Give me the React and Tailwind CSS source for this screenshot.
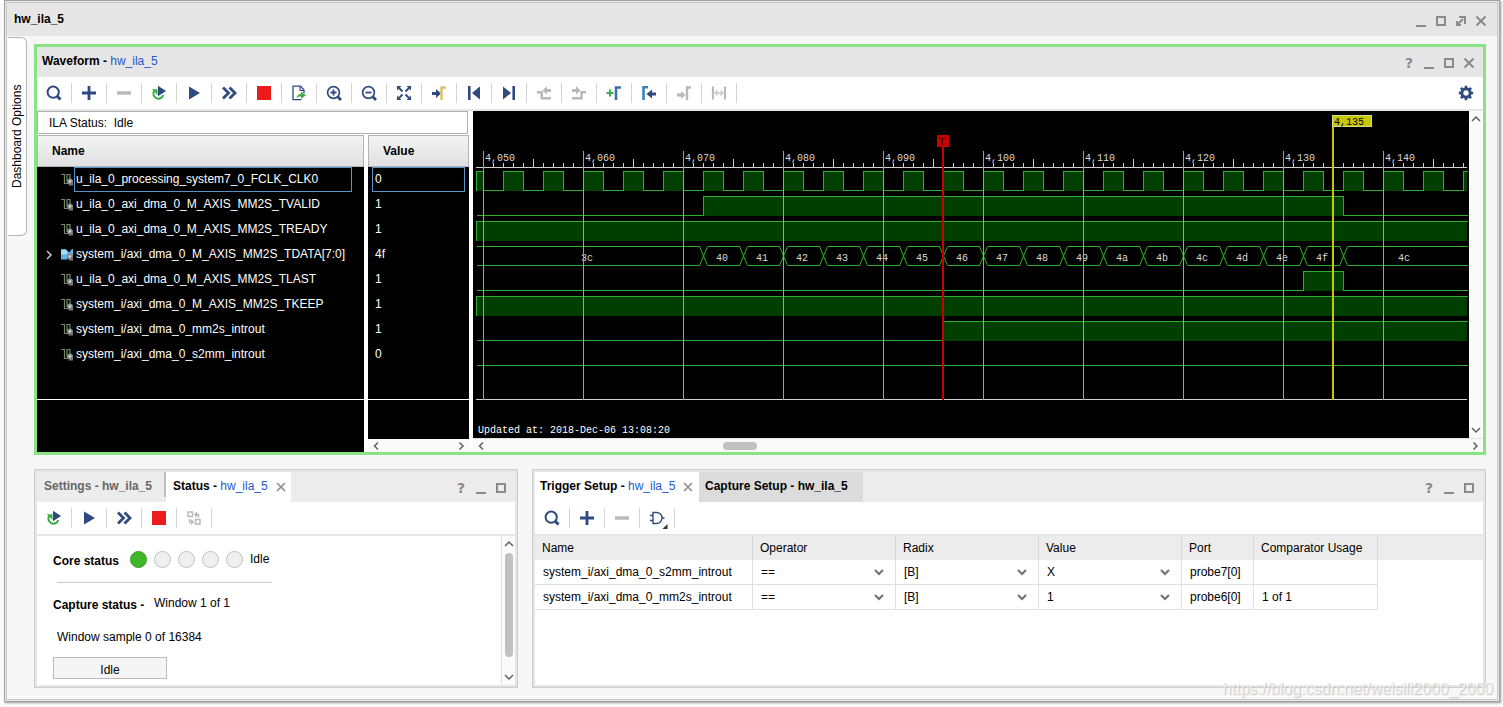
import React, { useState } from 'react';

const NAVY = '#2f4a80';
const GREEN = '#3fae49';
const GRAY = '#b8b8b8';

const icons = {
  search: (
    <g fill="none" stroke={NAVY}>
      <circle cx="7.2" cy="7.2" r="5.6" strokeWidth="2" />
      <path d="M11 11l3.5 3.5" strokeWidth="3" />
    </g>
  ),
  plus: <path d="M8 1v14M1 8h14" stroke={NAVY} strokeWidth="2.8" />,
  minus: <path d="M1 8h14" stroke={GRAY} strokeWidth="3.4" />,
  rerun: (
    <g>
      <path d="M3.500 5.500a5 5 0 1 0 8.700 4.500" fill="none" stroke={GREEN} strokeWidth="2" />
      <path d="M.800 4.300h5.700v5.700z" fill={GREEN} />
      <path d="M7 .800l8 5.200-8 5.200z" fill={NAVY} />
    </g>
  ),
  play: <path d="M3 1.500l11 6.500-11 6.500z" fill={NAVY} />,
  forward: <path d="M2 2.500L7.500 8 2 13.500M8.500 2.500L14 8l-5.500 5.500" fill="none" stroke={NAVY} strokeWidth="2.800" />,
  stop: <path d="M1 1h14v14H1z" fill="#ec1c1c" />,
  exportFile: (
    <g>
      <path d="M13 8V5L9.500 1.200H2v13.500h8.500" fill="none" stroke={NAVY} strokeWidth="1.300" />
      <path d="M9 1.500V5.500h4" fill="none" stroke={NAVY} strokeWidth="1.100" />
      <path d="M5.500 13c.3-3 2-4 4.500-4V6.500L15 10.200l-5 3.600v-2.300c-2 0-3.400.300-4.500 1.500z" fill={GREEN} />
    </g>
  ),
  zoomIn: (
    <g fill="none" stroke={NAVY}>
      <circle cx="7.500" cy="7.500" r="5.900" strokeWidth="1.700" />
      <path d="M11.500 11.500l3.500 3.500" strokeWidth="2.800" />
      <path d="M7.500 4.500v6M4.500 7.500h6" strokeWidth="1.800" />
    </g>
  ),
  zoomOut: (
    <g fill="none" stroke={NAVY}>
      <circle cx="7.500" cy="7.500" r="5.900" strokeWidth="1.700" />
      <path d="M11.500 11.500l3.500 3.500" strokeWidth="2.800" />
      <path d="M4.500 7.500h6" strokeWidth="1.800" />
    </g>
  ),
  fit: (
    <g fill={NAVY} stroke={NAVY} strokeWidth="1.800">
      <path d="M3 3l3.500 3.500M13 3L9.500 6.500M3 13l3.500-3.500M13 13L9.500 9.500" />
      <path d="M1 1h4.500L1 5.500zM15 1v4.500L10.500 1zM1 15v-4.500L5.500 15zM15 15h-4.500l4.500-4.500z" stroke="none" />
    </g>
  ),
  toCursor: (
    <g>
      <path d="M1 7h4V4l5 4.500L5 13v-3H1z" fill={NAVY} />
      <path d="M10.500 15V2.500H15" fill="none" stroke="#dcc56a" strokeWidth="2.600" />
    </g>
  ),
  first: (
    <g fill={NAVY}>
      <path d="M2 1h2.600v14H2z" />
      <path d="M14 1.500v13L6 8z" />
    </g>
  ),
  last: (
    <g fill={NAVY}>
      <path d="M11.400 1H14v14h-2.600z" />
      <path d="M2 1.500v13L10 8z" />
    </g>
  ),
  prevEdge: (
    <g>
      <path d="M1 7.200h4.800v6H15" fill="none" stroke={GRAY} strokeWidth="2.400" />
      <path d="M15 4h-4V1L6.500 5.500l4.500 4V7h4z" fill={GRAY} />
    </g>
  ),
  nextEdge: (
    <g>
      <path d="M15 7.200h-4.500v6H1" fill="none" stroke={GRAY} strokeWidth="2.400" />
      <path d="M1 4h4V1l4.500 4.500-4.500 4V7H1z" fill={GRAY} />
    </g>
  ),
  addMarker: (
    <g fill="none">
      <path d="M4 4.500v7M.500 8h7" stroke={GREEN} strokeWidth="2" />
      <path d="M10 15V2.500h5" stroke="#3a72b0" strokeWidth="2.600" />
    </g>
  ),
  prevMarker: (
    <g>
      <path d="M2.500 15V2.300H7" fill="none" stroke="#3a83bd" strokeWidth="2.600" />
      <path d="M15 7.500h-4V4.500L5.500 9l5.500 4.500v-3h4z" fill={NAVY} />
    </g>
  ),
  nextMarker: (
    <g>
      <path d="M1 8.500h4V6l4.500 4L5 14v-2.500H1z" fill={GRAY} />
      <path d="M11 15V2.500h4" fill="none" stroke={GRAY} strokeWidth="2.400" />
    </g>
  ),
  swap: (
    <g fill="none" stroke={GRAY} strokeWidth="2.200">
      <path d="M2 1.500v13M14 1.500v13" />
      <path d="M4 8h8" strokeWidth="1.200" />
      <path d="M6.500 5.500L4.200 8l2.300 2.500M9.500 5.500L11.800 8l-2.300 2.500" strokeWidth="1.100" />
    </g>
  ),
  gear: (
    <g fill="none" stroke={NAVY}>
      <circle cx="8" cy="8" r="4.200" strokeWidth="3" />
      <path d="M8 .8v3M8 12.200v3M.8 8h3M12.200 8h3M2.900 2.900l2 2M11.100 11.100l2 2M2.900 13.100l2-2M11.100 4.900l2-2" strokeWidth="2.600" />
    </g>
  ),
  dashboard: (
    <g fill="none" stroke={GRAY} strokeWidth="1.400">
      <path d="M2 2h4.500v4.500H2zM9.500 9.500H14V14H9.500z" />
      <path d="M9 4.500h3.500v3M11 2.300L8.800 4.500 11 6.700M3.500 9v3H7M5 9.800L7.200 12 5 14.200" />
    </g>
  ),
  gate: (
    <g>
      <path d="M4 2.500h3.500a5.500 5.500 0 0 1 0 11H4zM1 5.500h3M1 10.500h3M13 8h2.500" fill="none" stroke={NAVY} strokeWidth="1.400" />
      <path d="M18.500 14v5h-5z" fill="#333" />
    </g>
  ),
};

const Icon = ({ name }) => (
  <svg viewBox="0 0 16 16" className="w-4 h-4 overflow-visible" aria-hidden="true">{icons[name]}</svg>
);

const Toolbar = ({ items, children }) => (
  <div className="flex items-center h-[34px] pb-px bg-white border-b-2 border-[#e6e6e6]">
    {items.map((name) => (
      <button key={name} aria-label={name} className="flex items-center justify-center w-[35px] h-5 border-r border-[#d4d4d4]">
        <Icon name={name} />
      </button>
    ))}
    {children}
  </div>
);

const controlPaths = {
  minimize: 'M3 13h10',
  maximize: 'M4 4h8v8H4z',
  float: 'M6 4h6v7M10 6l-6 6M4 8v4h4',
  close: 'M3.500 3.500l9 9M12.500 3.500l-9 9',
};

const Controls = ({ items }) => (
  <div className="flex ml-auto pr-1 pt-1.5">
    {items.map((name) => (
      <button key={name} aria-label={name} className="flex items-center justify-center w-5 h-5">
        {name === 'help' ? (
          <span className="font-['DejaVu_Sans'] font-bold text-[14px] leading-4 text-[#8a8a8a]">?</span>
        ) : (
          <svg viewBox="0 0 16 16" className="w-4 h-4" fill="none" stroke="#8a8a8a" strokeWidth="2">
            <path d={controlPaths[name]} />
          </svg>
        )}
      </button>
    ))}
  </div>
);

const Chevron = ({ dir }) => {
  const d = {
    left: 'M8 2.500L4.500 6 8 9.500',
    right: 'M4.500 2.500L8 6 4.500 9.500',
    up: 'M2 8l4-4 4 4',
    down: 'M2 4l4 4 4-4',
  }[dir];
  return (
    <svg viewBox="0 0 12 12" className="w-3 h-3" fill="none" stroke="#606060" strokeWidth="1.500">
      <path d={d} />
    </svg>
  );
};

const signals = [
  { name: 'u_ila_0_processing_system7_0_FCLK_CLK0', value: '0' },
  { name: 'u_ila_0_axi_dma_0_M_AXIS_MM2S_TVALID', value: '1', high: [[4072, 4136]] },
  { name: 'u_ila_0_axi_dma_0_M_AXIS_MM2S_TREADY', value: '1', high: 'all' },
  { name: 'system_i/axi_dma_0_M_AXIS_MM2S_TDATA[7:0]', value: '4f', bus: true },
  { name: 'u_ila_0_axi_dma_0_M_AXIS_MM2S_TLAST', value: '1', high: [[4132, 4136]] },
  { name: 'system_i/axi_dma_0_M_AXIS_MM2S_TKEEP', value: '1', high: 'all' },
  { name: 'system_i/axi_dma_0_mm2s_introut', value: '1', high: [[4096, 4150]] },
  { name: 'system_i/axi_dma_0_s2mm_introut', value: '0', high: [] },
];

const SignalIcon = ({ bus }) => (
  <svg viewBox="0 0 13 13" className="w-[13px] h-[13px] shrink-0" aria-hidden="true">
    {bus ? (
      <g>
        <path d="M0 1.500h5l3 3 3-3.500h1v6.500H8l-2 4H0z" fill="#5fb0e6" />
        <path d="M0 1.500h5l2 3-2 2H0z" fill="#a8dbf7" />
      </g>
    ) : (
      <path d="M0 1.500h3.500v9H7M6 9V1.500h3V6" fill="none" stroke="#71886a" strokeWidth="1.200" />
    )}
    <circle cx="9" cy="8.500" r="3" fill="#8c8c8c" />
    <circle cx="9" cy="8.500" r="1.200" fill="#d8d8d8" />
    <path d="M7 12.500l5-5v5z" fill="#777" />
  </svg>
);

// 10px per sample, sample 4050 sits at x = 10
const X0 = 3;
const X1 = 994;
const toX = (sample) => Math.max(X0, Math.min(X1, 10 + (sample - 4050) * 10));

const clock = [[4049, 4050]];
for (let s = 4052; s < 4149; s += 4) clock.push([s, s + 2]);

const busValues = '40 41 42 43 44 45 46 47 48 49 4a 4b 4c 4d 4e 4f'.split(' ');

const Digital = ({ high, y }) => {
  const top = y;
  const low = y + 19;
  const ranges = high === 'all' ? [[4040, 4160]] : high;
  let d = `M${X0} ${low}`;
  ranges.forEach(([a, b]) => {
    const end = toX(b);
    d += `H${toX(a)}V${top}H${end}`;
    if (end < X1) d += `V${low}`;
  });
  if (!ranges.length || toX(ranges[ranges.length - 1][1]) < X1) d += `H${X1}`;
  return (
    <g>
      {ranges.map(([a, b]) => (
        <rect key={a} x={toX(a)} y={top} width={toX(b) - toX(a)} height={20} fill="#003f00" />
      ))}
      <path d={d} transform="translate(.5 .5)" fill="none" stroke="#2cb02c" />
    </g>
  );
};

const Bus = ({ y }) => {
  const edges = [];
  for (let s = 4072; s <= 4136; s += 4) edges.push(toX(s));
  const starts = [X0, ...edges.map((x) => x + 4)];
  const ends = [...edges.map((x) => x - 4), X1];
  return (
    <g>
      <g transform="translate(.5 .5)" fill="none" stroke="#2cb02c">
        {starts.map((x, i) => (
          <path key={x} d={`M${x} ${y}H${ends[i]}M${x} ${y + 19}H${ends[i]}`} />
        ))}
        {edges.map((x) => (
          <path key={x} shapeRendering="auto" d={`M${x - 4} ${y}L${x + 4} ${y + 19}M${x + 4} ${y}L${x - 4} ${y + 19}`} />
        ))}
      </g>
      <g fill="#d8d8d8" textAnchor="middle">
        <text x="114" y={y + 15}>3c</text>
        {busValues.map((v, i) => (
          <text key={v} x={249 + i * 40} y={y + 15}>{v}</text>
        ))}
        <text x="931" y={y + 15}>4c</text>
      </g>
    </g>
  );
};

const WaveView = () => {
  const majors = [4050, 4060, 4070, 4080, 4090, 4100, 4110, 4120, 4130, 4140];
  const ticks = [];
  for (let s = 4050; s <= 4148; s++) ticks.push(s);
  return (
    <svg className="block w-full h-[327px] bg-black font-['Liberation_Mono',monospace] text-[10px]" shapeRendering="crispEdges">
      {ticks.map((s) => (
        <rect key={s} x={toX(s)} y={s % 5 === 0 ? 48 : 52} width="1" height={s % 5 === 0 ? 8 : 4} fill="#d0d0d0" />
      ))}
      <rect x={X0} y="56" width="991" height="1" fill="#d0d0d0" />
      <rect x={X0} y="288" width="991" height="1" fill="#d0d0d0" />
      {signals.map((sig, i) =>
        sig.bus ? (
          <Bus key={sig.name} y={60 + i * 25} />
        ) : (
          <Digital key={sig.name} high={sig.high || clock} y={60 + i * 25} />
        )
      )}
      {majors.map((s) => (
        <g key={s}>
          <rect x={toX(s)} y="40" width="1" height="249" fill="#a0a0a0" />
          <text x={toX(s) + 2} y="50" fill="#d8d8d8">{s.toLocaleString('en-US')}</text>
        </g>
      ))}
      <rect x="464" y="24" width="12" height="12" fill="#c80000" />
      <rect x="469" y="30" width="2" height="259" fill="#c80000" />
      <text x="466" y="34" fill="#200000">T</text>
      <rect x="859" y="4" width="2" height="285" fill="#c8c800" />
      <rect x="859" y="4" width="40" height="12" fill="#d8d890" />
      <rect x="860" y="5" width="38" height="10" fill="#c8c800" />
      <text x="861" y="14" fill="#000">4,135</text>
      <text x="5" y="322" fill="#fff">Updated at: 2018-Dec-06 13:08:20</text>
    </svg>
  );
};

const mainTools = [
  'search', 'plus', 'minus', 'rerun', 'play', 'forward', 'stop', 'exportFile', 'zoomIn', 'zoomOut',
  'fit', 'toCursor', 'first', 'last', 'prevEdge', 'nextEdge', 'addMarker', 'prevMarker', 'nextMarker', 'swap',
];

const columnHead = 'flex items-center h-8 px-3.5 font-bold text-black border border-[#b4b4b4] bg-linear-to-b from-[#f4f4f4] to-[#e0e0e2]';

const Waveform = () => {
  const [selected, setSelected] = useState(0);
  return (
    <section className="border-[3px] border-[#8ae382] bg-white">
      <div className="flex h-[30px] bg-[#e6e6e6]">
        <h2 className="pl-[5px] leading-7 font-bold">
          Waveform - <span className="font-normal text-[#1f57d0]">hw_ila_5</span>
        </h2>
        <Controls items={['help', 'minimize', 'maximize', 'close']} />
      </div>
      <Toolbar items={mainTools}>
        <button aria-label="settings" className="ml-auto mr-[9px]"><Icon name="gear" /></button>
      </Toolbar>
      <div className="flex">
        <div className="flex flex-col w-[432px] mr-1 shrink-0">
          <div className="h-[23px] mr-px mb-px pl-[11px] leading-[22px] border border-[#b0b0b0] whitespace-pre">ILA Status:  Idle</div>
          <div className="flex flex-1 gap-1">
            <div className="flex flex-col w-[327px] bg-black text-white">
              <div className={columnHead}>Name</div>
              <ul className="h-[232px]">
                {signals.map((s, i) => (
                  <li key={s.name} onClick={() => setSelected(i)} className="flex items-center h-[25px] pl-1.5 pr-3">
                    <span className="flex w-[18px]">
                      {s.bus && (
                        <svg viewBox="0 0 12 12" className="w-3 h-3" fill="none" stroke="#c8c8c8" strokeWidth="1.5">
                          <path d="M4 2l4 4-4 4" />
                        </svg>
                      )}
                    </span>
                    <SignalIcon bus={s.bus} />
                    <span className={`flex-1 h-[25px] px-px leading-[23px] border ${i === selected ? 'border-[#5b93c4]' : 'border-transparent'}`}>
                      {s.name}
                    </span>
                  </li>
                ))}
              </ul>
              <div className="border-t border-white" />
            </div>
            <div className="flex flex-col flex-1 bg-black text-white">
              <div className={columnHead}>Value</div>
              <ul className="h-[232px]">
                {signals.map((s, i) => (
                  <li key={s.name} className={`h-[25px] ml-1 mr-1 px-0.5 leading-[23px] border ${i === selected ? 'border-[#5b93c4]' : 'border-transparent'}`}>
                    {s.value}
                  </li>
                ))}
              </ul>
              <div className="border-t border-white" />
              <div className="flex items-center justify-between h-[13px] mt-auto px-0.5 bg-[#fafafa]">
                <Chevron dir="left" />
                <Chevron dir="right" />
              </div>
            </div>
          </div>
        </div>
        <div className="flex-1 min-w-0">
          <div className="flex">
            <div className="flex-1 min-w-0"><WaveView /></div>
            <div className="flex flex-col items-center justify-between w-[14px] py-0.5 bg-[#fafafa]">
              <Chevron dir="up" />
              <Chevron dir="down" />
            </div>
          </div>
          <div className="flex items-center h-[14px] px-0.5 bg-[#fafafa] border-t border-[#e4e4e4]">
            <Chevron dir="left" />
            <div className="flex-1"><div className="w-[34px] h-2 ml-[24%] rounded-full bg-[#c1c1c1]" /></div>
            <Chevron dir="right" />
          </div>
        </div>
      </div>
    </section>
  );
};

const panelClass = 'flex flex-col border border-[#cccccc]';
const panelInner = 'flex flex-col flex-1 border-2 border-[#e6e6e6] bg-white';

const TabClose = () => (
  <button aria-label="close tab" className="ml-2 pt-0.5">
    <svg viewBox="0 0 10 10" className="w-2.5 h-2.5" fill="none" stroke="#8c8c8c" strokeWidth="1.6">
      <path d="M1 1l8 8M9 1L1 9" />
    </svg>
  </button>
);

const StatusPanel = () => (
  <section className={`${panelClass} w-1/3 shrink-0`}>
    <div className={panelInner}>
      <div className="flex h-[30px] bg-[#ececec]">
        <button className="w-[129px] h-[25px] pl-[7px] pt-0.5 text-left font-bold text-[#666] border-r-2 border-[#bdbdbd]">Settings - hw_ila_5</button>
        <div className="flex items-center w-[125px] pl-[7px] pb-0.5 bg-white">
          <button className="font-bold whitespace-nowrap">
            Status - <span className="font-normal text-[#1f57d0]">hw_ila_5</span>
          </button>
          <TabClose />
        </div>
        <Controls items={['help', 'minimize', 'maximize']} />
      </div>
      <Toolbar items={['rerun', 'play', 'forward', 'stop', 'dashboard']} />
      <div className="flex flex-1">
        <div className="flex-1 pl-4 pt-[13px]">
          <div className="flex items-center h-5 gap-[7px]">
            <b className="w-[70px] pt-1">Core status</b>
            <span className="w-[17px] h-[17px] rounded-full border border-[#3a9d26] bg-[#41b62b]" />
            {[1, 2, 3, 4].map((n) => (
              <span key={n} className="w-[17px] h-[17px] rounded-full border border-[#c0c0c0] bg-[#efefef]" />
            ))}
            <span>Idle</span>
          </div>
          <div className="w-[215px] mt-[13px] ml-1 border-t border-[#c8c8c8]" />
          <div className="flex mt-3">
            <b className="w-[101px] pt-0.5">Capture status -</b>
            <span>Window 1 of 1</span>
          </div>
          <div className="mt-4 pl-1">Window sample 0 of 16384</div>
          <div className="w-[114px] h-[22px] mt-3 leading-6 text-center border border-[#bcbcbc] bg-[#f5f5f5]">Idle</div>
        </div>
        <div className="flex flex-col items-center w-[14px] py-0.5 bg-[#fafafa] border-l border-[#e0e0e0]">
          <Chevron dir="up" />
          <div className="flex-1 w-2 mt-[3px] mb-3.5 rounded-full bg-[#c1c1c1]" />
          <Chevron dir="down" />
        </div>
      </div>
    </div>
  </section>
);

const triggers = [
  { name: 'system_i/axi_dma_0_s2mm_introut', value: 'X', port: 'probe7[0]', usage: '' },
  { name: 'system_i/axi_dma_0_mm2s_introut', value: '1', port: 'probe6[0]', usage: '1 of 1' },
];

const CellSelect = ({ label, value }) => (
  <div className="relative">
    <select aria-label={label} defaultValue={value} className="block w-full h-6 pl-2 appearance-none bg-transparent">
      <option>{value}</option>
    </select>
    <svg viewBox="0 0 12 12" className="absolute right-[10px] top-1.5 w-3 h-3 pointer-events-none" fill="none" stroke="#707070" strokeWidth="2">
      <path d="M2 4l4 4 4-4" />
    </svg>
  </div>
);

const th = 'h-6 pl-[7px] text-left font-normal border-r border-[#d6d6d6]';
const td = 'h-[25px] border-r border-b border-[#e0e0e0]';

const TriggerPanel = () => (
  <section className={`${panelClass} flex-1 min-w-0`}>
    <div className={panelInner}>
      <div className="flex h-[30px] bg-[#ececec]">
        <div className="flex items-center w-[164px] pl-[5px] pb-0.5 bg-white">
          <button className="font-bold whitespace-nowrap">
            Trigger Setup - <span className="font-normal text-[#1f57d0]">hw_ila_5</span>
          </button>
          <TabClose />
        </div>
        <button className="w-[164px] pl-1.5 pb-0.5 text-left font-bold bg-[#dcdcdc]">Capture Setup - hw_ila_5</button>
        <Controls items={['help', 'minimize', 'maximize']} />
      </div>
      <Toolbar items={['search', 'plus', 'minus', 'gate']} />
      <div className="bg-linear-to-b from-[#ececec] from-[24px] to-white to-[24px]">
        <table className="table-fixed w-[843px] border-separate border-spacing-0">
          <thead>
            <tr>
              <th className={`${th} w-[218px]`}>Name</th>
              <th className={`${th} w-[143px]`}>Operator</th>
              <th className={`${th} w-[143px]`}>Radix</th>
              <th className={`${th} w-[143px]`}>Value</th>
              <th className={`${th} w-[72px]`}>Port</th>
              <th className={th}>Comparator Usage</th>
            </tr>
          </thead>
          <tbody>
            {triggers.map((t) => (
              <tr key={t.name}>
                <td className={`${td} pl-2`}>{t.name}</td>
                <td className={td}><CellSelect label="Operator" value="==" /></td>
                <td className={td}><CellSelect label="Radix" value="[B]" /></td>
                <td className={td}><CellSelect label="Value" value={t.value} /></td>
                <td className={`${td} pl-2`}>{t.port}</td>
                <td className={`${td} pl-2`}>{t.usage}</td>
              </tr>
            ))}
          </tbody>
        </table>
      </div>
    </div>
  </section>
);

export default function App() {
  return (
    <div className="relative flex flex-col min-h-screen pl-1 pr-[3px] pb-[5px] bg-[#fbfbfb] font-['Liberation_Sans',Arial,sans-serif] text-[12px] leading-4 text-black">
      <div className="flex flex-col flex-1 border border-[#a0a0a0] p-px bg-[#e8e8e8] shadow-[1px_1px_2px_#999]">
        <div className="flex flex-col flex-1 border border-[#c8c8c8] bg-[#f7f7f7]">
          <header className="flex h-[33px] pt-0.5 pr-0.5 bg-[#e6e6e6]">
            <h1 className="pl-[7px] leading-7 font-bold">hw_ila_5</h1>
            <Controls items={['minimize', 'maximize', 'float', 'close']} />
          </header>
          <div className="flex flex-1 pl-px pr-[11px]">
            <button className="w-[19px] h-[199px] mt-px shrink-0 rounded-l-md border border-r-0 border-[#b4b4b4] bg-white [writing-mode:vertical-rl] rotate-180">
              Dashboard Options
            </button>
            <main className="flex flex-col flex-1 min-w-0 gap-3.5 pl-[7px] pt-2 pb-[11px]">
              <Waveform />
              <div className="flex flex-1 gap-3.5">
                <StatusPanel />
                <TriggerPanel />
              </div>
            </main>
          </div>
        </div>
      </div>
      <span className="absolute right-2.5 bottom-2 text-[16px] leading-5 text-white/60 [text-shadow:1px_1px_1px_#c4c4c4]">
        https://blog.csdn.net/weisili2000_2000
      </span>
    </div>
  );
}
